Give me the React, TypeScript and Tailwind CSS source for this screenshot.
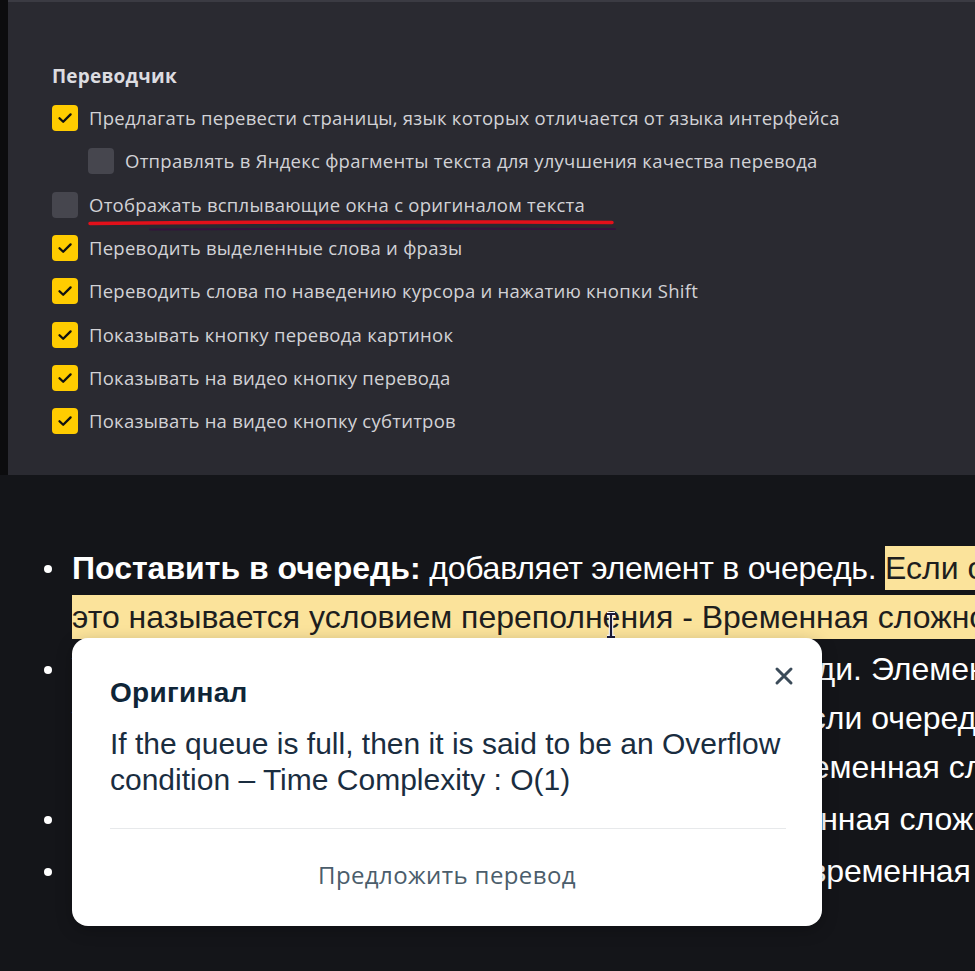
import React from "react";

const rows: { text: string; checked: boolean; indent?: boolean }[] = [
  { text: "Предлагать перевести страницы, язык которых отличается от языка интерфейса", checked: true },
  { text: "Отправлять в Яндекс фрагменты текста для улучшения качества перевода", checked: false, indent: true },
  { text: "Отображать всплывающие окна с оригиналом текста", checked: false },
  { text: "Переводить выделенные слова и фразы", checked: true },
  { text: "Переводить слова по наведению курсора и нажатию кнопки Shift", checked: true },
  { text: "Показывать кнопку перевода картинок", checked: true },
  { text: "Показывать на видео кнопку перевода", checked: true },
  { text: "Показывать на видео кнопку субтитров", checked: true },
];

function Box({ checked }: { checked: boolean }) {
  if (!checked) {
    return <div className="w-[26px] h-[26px] rounded-[4px] bg-[#46464e] shrink-0" />;
  }
  return (
    <div className="w-[26px] h-[26px] rounded-[4px] bg-[#ffcc00] shrink-0 flex items-center justify-center">
      <svg width="26" height="26" viewBox="0 0 26 26">
        <path d="M7.5 13.2 L11.2 16.8 L18.6 9.4" fill="none" stroke="#111" strokeWidth="2.3" strokeLinecap="round" strokeLinejoin="round" />
      </svg>
    </div>
  );
}

function Dot() {
  return (
    <div className="w-[28px] h-[49px] flex items-center shrink-0">
      <div className="w-[8px] h-[8px] rounded-full bg-white" />
    </div>
  );
}

const hl = "bg-[#fbe39b] text-[#1e1e1e] py-[4px]";

export default function App() {
  return (
    <div className="relative w-[975px] h-[971px] overflow-hidden bg-[#141519]" style={{ fontFamily: "'Open Sans', 'Noto Sans', sans-serif" }}>
      {/* Settings panel */}
      <div className="flex h-[475px]">
        <div className="w-[8px] bg-[#0c0c0e] shrink-0" />
        <div className="flex-1 bg-[#2a2a31] border-t-[2px] border-[#3b3b43] pl-[44px] pt-[62px] flex flex-col">
          <div className="text-[19px] leading-[24px] font-bold text-[#dcdce0] tracking-[0.2px]">Переводчик</div>
          <div className="mt-[8.4px] flex flex-col">
            {rows.map((r, i) => (
              <div key={i} className={`h-[43.3px] flex items-center gap-[11px] ${r.indent ? "pl-[36px]" : ""}`}>
                <Box checked={r.checked} />
                <span className="text-[18.5px] tracking-[0.25px] text-[#d2d2d6] whitespace-nowrap">{r.text}</span>
              </div>
            ))}
          </div>
        </div>
      </div>

      {/* Article list */}
      <div
        className="pt-[69px] pl-[44px] flex flex-col text-[32px] text-white whitespace-nowrap"
        style={{ fontFamily: "'Liberation Sans', Arial, sans-serif" }}
      >
        <div className="flex">
          <Dot />
          <div className="flex flex-col">
            <div className="h-[49px] leading-[49px]">
              <b>Поставить в очередь:</b>
              <span className="tracking-[-0.25px]"> добавляет элемент в очередь. </span>
              <span className={hl}>Если очередь заполнена,</span>
            </div>
            <div className="h-[49px] leading-[49px]">
              <span className={hl}>это называется условием переполнения ‑ Временная сложность: O(1)</span>
            </div>
          </div>
        </div>
        <div className="flex mt-[3px]">
          <Dot />
          <div className="flex flex-col">
            <div className="h-[49px] leading-[49px]">
              <b>Удаление из очереди:</b> удаляет элемент из очереди. Элементы
            </div>
            <div className="h-[49px] leading-[49px]">
              удаляются из начала в порядке их добавления. Если очередь
            </div>
            <div className="h-[49px] leading-[49px]">
              пуста, это называется случаем опустошения – Временная сложность
            </div>
          </div>
        </div>
        <div className="flex mt-[3px]">
          <Dot />
          <div className="h-[49px] leading-[49px]">
            <b>Первый:</b> получение переднего элемента – Временная сложность: O(1)
          </div>
        </div>
        <div className="flex mt-[3px]">
          <Dot />
          <div className="h-[49px] leading-[49px] tracking-[-0.2px]">
            <b>Конец:</b> получение конечного элемента очереди – временная сложность: O(1)
          </div>
        </div>
      </div>

      {/* Red annotation underline */}
      <svg className="absolute left-0 top-0 pointer-events-none" width="975" height="240" viewBox="0 0 975 240">
        <path d="M90 223.5 Q350 221 612 222.5" fill="none" stroke="#e3101a" strokeWidth="3.5" strokeLinecap="round" />
        <path d="M150 229.5 Q400 228 615 229" fill="none" stroke="#34123c" strokeWidth="2" strokeLinecap="round" />
      </svg>

      {/* Text cursor */}
      <svg className="absolute left-[605px] top-[612px] pointer-events-none" width="12" height="27" viewBox="0 0 12 27">
        <path d="M2 2 H10 M6 2 V25 M2 25 H10" fill="none" stroke="#fff" strokeWidth="4.5" />
        <path d="M2 2 H10 M6 2 V25 M2 25 H10" fill="none" stroke="#1b1b3a" strokeWidth="2.2" />
      </svg>

      {/* Popup */}
      <div
        className="absolute left-[72px] top-[638px] w-[750px] h-[288px] bg-white rounded-[16px] shadow-[0_4px_16px_rgba(0,0,0,0.25)] flex flex-col px-[38px] pt-[39px]"
        style={{ fontFamily: "'Liberation Sans', Arial, sans-serif" }}
      >
        <div className="text-[28px] leading-[32px] font-bold text-[#0f2537] tracking-[0.3px]">Оригинал</div>
        <div className="mt-[17px] text-[30px] leading-[36px] text-[#1a2d3f]">
          If the queue is full, then it is said to be an Overflow
          <br />
          condition – Time Complexity : O(1)
        </div>
        <div className="mt-[30px] h-[1px] bg-[#e7e9eb] mr-[-2px]" />
        <div
          className="mt-[30px] text-center text-[24px] leading-[32px] tracking-[0.4px] text-[#4b5d6b]"
          style={{ fontFamily: "'Open Sans', 'Noto Sans', sans-serif" }}
        >
          Предложить перевод
        </div>
        <svg className="absolute left-[702px] top-[28px]" width="20" height="20" viewBox="0 0 20 20">
          <path d="M3 3 L17 17 M17 3 L3 17" stroke="#3b4b59" strokeWidth="3" strokeLinecap="round" />
        </svg>
      </div>
    </div>
  );
}
